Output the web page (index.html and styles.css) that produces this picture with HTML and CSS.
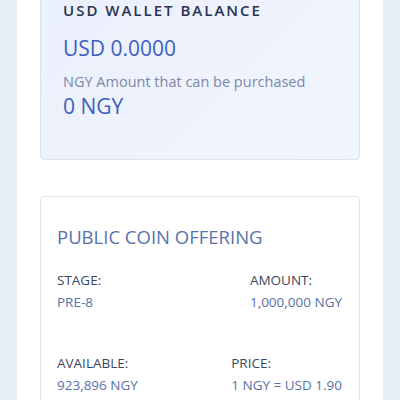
FILE: index.html
```html
<!DOCTYPE html>
<html lang="en">
<head>
    <meta charset="UTF-8">
    <meta name="viewport" content="width=device-width, initial-scale=1.0">
    <title>Wallet</title>
    <link rel="stylesheet" href="styles.css">
</head>
<body>
    <div class="panel">
        <!-- Wallet balance -->
        <div class="card wallet">
            <h2 class="wallet-title">USD WALLET BALANCE</h2>
            <div class="wallet-amount">USD 0.0000</div>
            <div class="wallet-label">NGY Amount that can be purchased</div>
            <div class="wallet-amount small">0 NGY</div>
        </div>

        <!-- Offering -->
        <div class="card offering">
            <h3 class="offering-title">PUBLIC COIN OFFERING</h3>
            <div class="offering-row">
                <div class="stat">
                    <div class="stat-label">STAGE:</div>
                    <div class="stat-value">PRE-8</div>
                </div>
                <div class="stat">
                    <div class="stat-label">AMOUNT:</div>
                    <div class="stat-value">1,000,000 NGY</div>
                </div>
            </div>
            <div class="offering-row">
                <div class="stat">
                    <div class="stat-label">AVAILABLE:</div>
                    <div class="stat-value">923,896 NGY</div>
                </div>
                <div class="stat">
                    <div class="stat-label">PRICE:</div>
                    <div class="stat-value">1 NGY = USD 1.90</div>
                </div>
            </div>
        </div>
    </div>
</body>
</html>
```

FILE: styles.css
```css
body {
    margin: 0;
    background-color: #e8eef8;
    font-family: "Open Sans", "Liberation Sans", sans-serif;
    overflow: hidden;
}

.panel {
    background-color: #fff;
    margin: -25px 17px 0;
    padding: 0 23px 40px;
    min-height: 480px;
}

.card {
    border: 1px solid #dbe3ef;
    border-radius: 4px;
}

.wallet {
    background: linear-gradient(135deg, #eaf0fc, #f1f5fd);
    padding: 24px 22px 40px;
}

.wallet-title {
    margin: 0;
    font-size: 15px;
    line-height: 20px;
    font-weight: 600;
    letter-spacing: 2px;
    color: #2b3350;
}

.wallet-amount {
    margin-top: 15px;
    font-size: 21px;
    line-height: 26px;
    color: #3f5ec2;
}

.wallet-amount.small {
    margin-top: 2px;
}

.wallet-label {
    margin-top: 12px;
    font-size: 14.5px;
    line-height: 18px;
    color: #7b88a8;
}

.offering {
    margin-top: 36px;
    padding: 28px 17px 20px 16px;
}

.offering-title {
    margin: 0;
    font-size: 18.5px;
    line-height: 24px;
    font-weight: 400;
    color: #5872a8;
}

.offering-row {
    display: flex;
    justify-content: space-between;
    margin-top: 22px;
}

.offering-row + .offering-row {
    margin-top: 43px;
}

.stat-label {
    font-size: 13.5px;
    line-height: 18px;
    color: #3a4660;
}

.stat-value {
    margin-top: 4px;
    font-size: 13.5px;
    line-height: 18px;
    color: #5872a8;
}
```
